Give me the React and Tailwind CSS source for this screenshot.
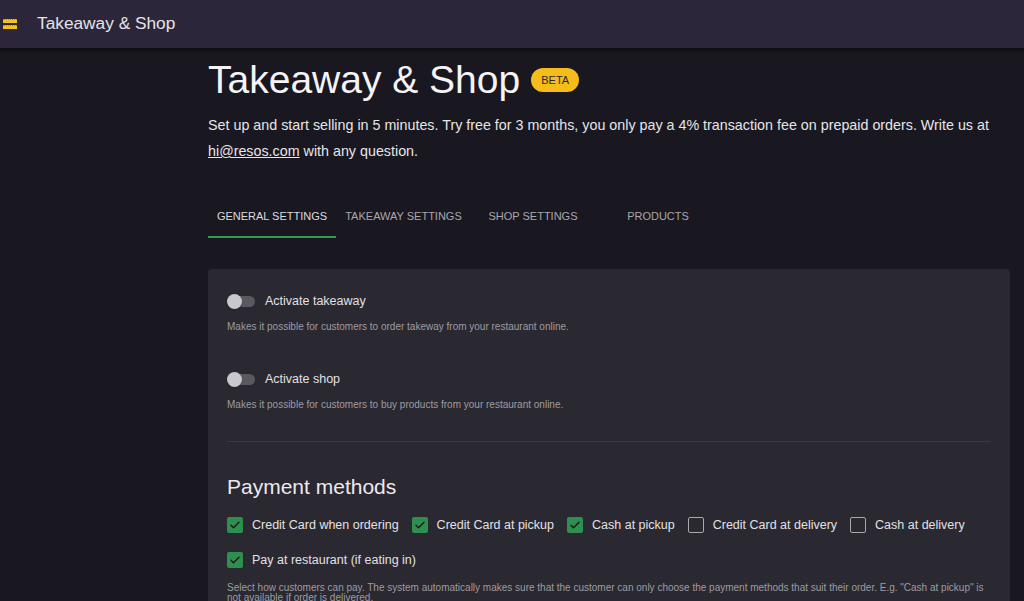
import React, { useState } from "react";

const tabs = [
    { label: "GENERAL SETTINGS", width: "w-[128px]" },
    { label: "TAKEAWAY SETTINGS", width: "w-[135px]" },
    { label: "SHOP SETTINGS", width: "w-[124px]" },
    { label: "PRODUCTS", width: "w-[126px]" },
];

const paymentRows = [
    [
        { label: "Credit Card when ordering", checked: true },
        { label: "Credit Card at pickup", checked: true },
        { label: "Cash at pickup", checked: true },
        { label: "Credit Card at delivery", checked: false },
        { label: "Cash at delivery", checked: false },
    ],
    [{ label: "Pay at restaurant (if eating in)", checked: true }],
];

const Toggle = ({ on, onClick }) => (
    <button onClick={onClick} className="relative w-[28px] h-[15px] flex items-center shrink-0">
        <span className="absolute left-[5px] right-0 h-[11px] rounded-full bg-[#5a5860]" />
        <span className="absolute left-0 w-[15px] h-[15px] rounded-full bg-[#c9c8cc] shadow" />
    </button>
);

const Checkbox = ({ checked, label }) => (
    <label className="flex items-center gap-[9px] mr-[13px]">
        {checked ? (
            <span className="w-[16px] h-[16px] rounded-[2px] bg-[#2f8f50] flex items-center justify-center">
                <svg width="12" height="12" viewBox="0 0 24 24" fill="none" stroke="#1c1c1c" strokeWidth="3" strokeLinecap="round" strokeLinejoin="round">
                    <path d="M4 12.5l5 5L20 6.5" />
                </svg>
            </span>
        ) : (
            <span className="w-[16px] h-[16px] rounded-[2px] border-[1.5px] border-[#a9a8ad]" />
        )}
        <span className="text-[12.5px] text-[#e2e1e5]">{label}</span>
    </label>
);

const SettingToggle = ({ label, description }) => {
    const [on, setOn] = useState(false);
    return (
        <div>
            <div className="flex items-center gap-[10px] h-[16px]">
                <Toggle on={on} onClick={() => setOn(!on)} />
                <span className="text-[12.5px] text-[#e2e1e5]">{label}</span>
            </div>
            <p className="mt-[12px] text-[10px] leading-[12px] text-[#9e9ca3]">{description}</p>
        </div>
    );
};

export default function App() {
    const [activeTab, setActiveTab] = useState(0);

    return (
        <div className="min-h-[601px] bg-[#19171f] font-['Liberation_Sans',Arial,sans-serif] overflow-hidden">
            <header className="h-[48px] bg-[#2b2639] flex items-center shadow-[0_2px_3px_rgba(0,0,0,0.5)] relative z-10">
                <div className="w-[37px] pl-[3px] flex flex-col gap-[2px]">
                    <span className="block w-[14px] h-[4px] bg-[#f4c21a] border-t border-dotted border-[#9c8a55]" />
                    <span className="block w-[14px] h-[4px] bg-[#f4c21a] border-t border-dotted border-[#9c8a55]" />
                </div>
                <h1 className="text-[17.3px] text-[#e4e3e8]">Takeaway &amp; Shop</h1>
            </header>

            <main className="pl-[208px] pr-[14px]">
                <div className="flex items-center gap-[11px] pt-[9px]">
                    <h2 className="text-[39px] leading-[46px] text-[#f4f3f6]">Takeaway &amp; Shop</h2>
                    <span className="h-[24px] px-[10px] rounded-full bg-[#f4bd19] text-[#2b2639] text-[11px] flex items-center">BETA</span>
                </div>
                <p className="mt-[9px] text-[14.3px] leading-[26px] text-[#e6e5ea]">
                    Set up and start selling in 5 minutes. Try free for 3 months, you only pay a 4% transaction fee on prepaid orders. Write us at{" "}
                    <a href="#" className="underline">hi@resos.com</a> with any question.
                </p>

                <nav className="flex mt-[33px]">
                    {tabs.map((tab, index) => (
                        <button
                            key={tab.label}
                            onClick={() => setActiveTab(index)}
                            className={`${tab.width} h-[41px] text-[11px] border-b-2 ${
                                index === activeTab ? "text-[#dcdbe0] border-[#2e9a55]" : "text-[#a9a7ae] border-transparent"
                            }`}
                        >
                            {tab.label}
                        </button>
                    ))}
                </nav>

                <section className="mt-[31px] bg-[#2a2830] rounded-t-[4px] pl-[19px] pr-[20px] pt-[24px] pb-[20px]">
                    <SettingToggle
                        label="Activate takeaway"
                        description="Makes it possible for customers to order takeway from your restaurant online."
                    />
                    <div className="mt-[38px]">
                        <SettingToggle
                            label="Activate shop"
                            description="Makes it possible for customers to buy products from your restaurant online."
                        />
                    </div>
                    <hr className="mt-[30px] border-t border-[#3b3942]" />

                    <h3 className="mt-[32px] text-[21px] leading-[26px] text-[#eceaf0]">Payment methods</h3>
                    <div className="mt-[17px] flex flex-col gap-[19px]">
                        {paymentRows.map((row, i) => (
                            <div key={i} className="flex items-center h-[16px]">
                                {row.map((item) => (
                                    <Checkbox key={item.label} checked={item.checked} label={item.label} />
                                ))}
                            </div>
                        ))}
                    </div>
                    <p className="mt-[15px] text-[10px] leading-[10px] text-[#9e9ca3]">
                        Select how customers can pay. The system automatically makes sure that the customer can only choose the payment methods that suit their order. E.g. "Cash at pickup" is not available if order is delivered.
                    </p>
                </section>
            </main>
        </div>
    );
}
